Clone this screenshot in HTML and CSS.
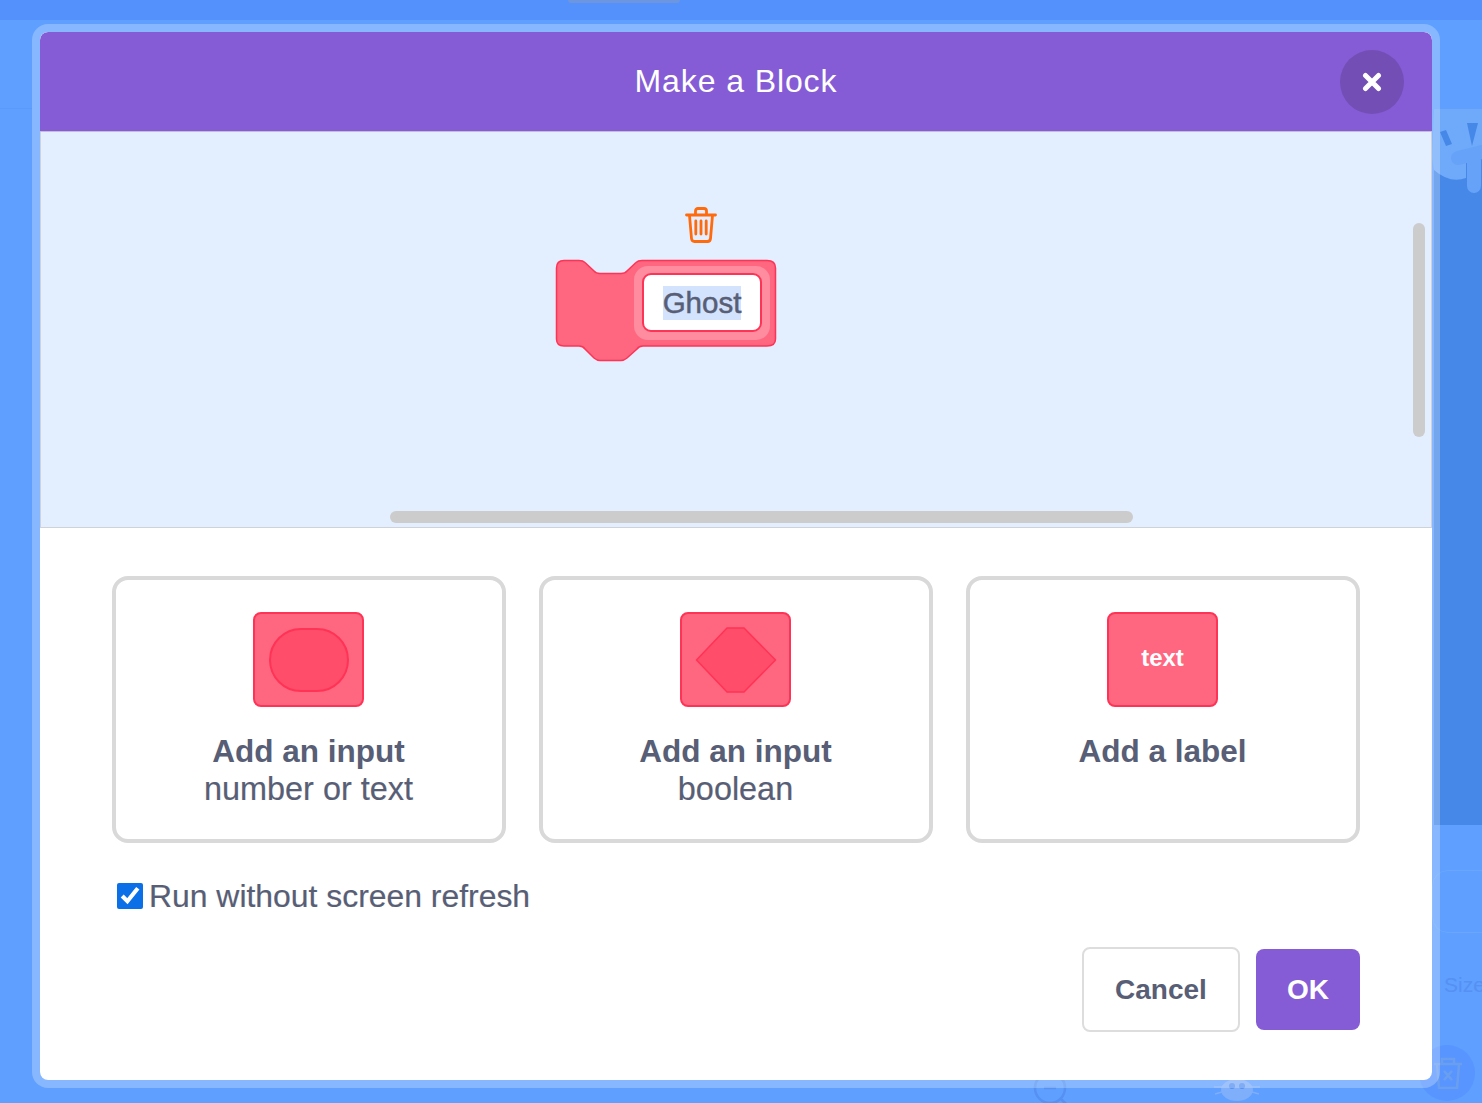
FILE: index.html
```html
<!DOCTYPE html>
<html lang="en">
<head>
    <meta charset="UTF-8">
    <title>Make a Block</title>
    <link rel="stylesheet" href="styles.css">
</head>
<body>

<!-- Editor behind the dialog, only faintly visible -->
<div class="backdrop">
    <div class="top-bar"><div class="top-tab"></div></div>
    <div class="left-line"></div>
    <div class="stage-area"></div>
    <svg class="sprite-ghost" width="62" height="90" viewBox="0 0 62 90">
        <path d="M14 1 H62 V50 H46 V70 Q30 76 14 62 L12 50 Z" fill="#6ea9fa"/>
        <path d="M47 15 H58 L52 38 Z M20 24 L26 22 L32 36 L26 38 Z" fill="#4688e8"/>
        <path d="M38 50 L62 44 M54 52 V78" stroke="#66a2f8" stroke-width="14" stroke-linecap="round" fill="none"/>
    </svg>
    <div class="panel-outline"></div>
    <span class="size-label">Size</span>
    <div class="trash-circle"></div>
    <svg class="trash-ghost" width="30" height="32" viewBox="0 0 30 32" fill="none" stroke="#6a9ff0" stroke-width="2.500">
        <path d="M1 7 H29 M9 6 V2 H21 V6 M4 8 L6 31 H24 L26 8"/>
        <path d="M11 14 L19 23 M19 14 L11 23"/>
    </svg>
    <svg class="search-ghost" width="44" height="44" viewBox="0 0 44 44" fill="none" stroke="#5590f2" stroke-width="2.500">
        <circle cx="20" cy="20" r="15"/>
        <path d="M14 20 H26 M31 31 L40 40"/>
    </svg>
    <svg class="cat-ghost" width="50" height="26" viewBox="0 0 50 26">
        <ellipse cx="25" cy="13" rx="16" ry="11" fill="#7faefa"/>
        <circle cx="20" cy="9" r="3" fill="#5590f2"/>
        <circle cx="30" cy="9" r="3" fill="#5590f2"/>
        <path d="M2 10 H10 M40 10 H48 M3 17 L10 15 M40 15 L47 17" stroke="#7faefa" stroke-width="1.500"/>
    </svg>
</div>

<div class="overlay">
    <div class="modal">
        <header class="modal-header">
            <h1>Make a Block</h1>
            <button class="close-btn" aria-label="Close">
                <svg width="20" height="20" viewBox="0 0 20 20">
                    <path d="M3.500 3.500 L16.500 16.500 M16.500 3.500 L3.500 16.500" stroke="#fff" stroke-width="5" stroke-linecap="round"/>
                </svg>
            </button>
        </header>

        <div class="workspace">
            <div class="proc-block">
                <svg class="trash" width="32" height="36" viewBox="0 0 32 36" fill="none" stroke="#ff6a0d" stroke-width="2.800" stroke-linecap="round" stroke-linejoin="round">
                    <path d="M1.500 8 H30.500"/>
                    <path d="M10.500 7.500 V4 Q10.500 1.500 13 1.500 H19 Q21.500 1.500 21.500 4 V7.500"/>
                    <path d="M4.500 8.500 L6.500 31.500 Q6.800 34.500 9.500 34.500 H22.500 Q25.200 34.500 25.500 31.500 L27.500 8.500"/>
                    <path d="M10.800 14 V27 M16 14 V27 M21.200 14 V27"/>
                </svg>
                <svg class="block-shape" width="222" height="104" viewBox="0 0 222 104">
                    <path d="M9 1.500 H24 Q28 1.500 30 3.500 L39 12 Q41 14.500 45 14.500 H66 Q70 14.500 72 12 L81 3.500 Q83 1.500 87 1.500 H212 Q220.500 1.500 220.500 9 V80 Q220.500 87 212 87 H88 Q84 87 82 90 L72 99 Q69 101.500 66 101.500 H45 Q42 101.500 39 99 L30 90 Q28 87 24 87 H9 Q1.500 87 1.500 80 V9 Q1.500 1.500 9 1.500 Z" fill="#ff6680" stroke="#ff3355" stroke-width="1.500"/>
                </svg>
                <div class="field-wrap">
                    <div class="field"><span class="selected">Ghost</span></div>
                </div>
            </div>
            <div class="scroll-v"></div>
            <div class="scroll-h"></div>
        </div>

        <div class="modal-body">
            <div class="options">
                <button class="option">
                    <span class="tile"><span class="oval"></span></span>
                    <strong>Add an input</strong>
                    <span class="option-sub">number or text</span>
                </button>
                <button class="option">
                    <span class="tile">
                        <svg width="82" height="66" viewBox="0 0 82 66">
                            <path d="M1.500 33 L32 1 H49 L80.500 33 L49 65 H32 Z" fill="#ff4d6a" stroke="#ff3355" stroke-width="1.500" stroke-linejoin="round"/>
                        </svg>
                    </span>
                    <strong>Add an input</strong>
                    <span class="option-sub">boolean</span>
                </button>
                <button class="option">
                    <span class="tile tile-text">text</span>
                    <strong>Add a label</strong>
                </button>
            </div>

            <label class="refresh">
                <input type="checkbox" checked>
                <span>Run without screen refresh</span>
            </label>

            <div class="actions">
                <button class="btn btn-cancel">Cancel</button>
                <button class="btn btn-ok">OK</button>
            </div>
        </div>
    </div>
</div>

</body>
</html>
```

FILE: styles.css
```css
* {
    box-sizing: border-box;
}

html, body {
    height: 100%;
}

body {
    margin: 0;
    overflow: hidden;
    background: #5e9fff;
    font-family: "Liberation Sans", Arial, sans-serif;
    color: #575e75;
}

button {
    font-family: inherit;
    color: inherit;
    cursor: pointer;
}

/* Editor behind the dialog */
.top-bar {
    position: absolute;
    top: 0;
    left: 0;
    right: 0;
    height: 20px;
    background: #5491fd;
}

.top-tab {
    width: 112px;
    height: 3px;
    margin-left: 568px;
    border-radius: 0 0 4px 4px;
    background: #6c96e0;
}

.left-line {
    position: absolute;
    top: 108px;
    left: 0;
    width: 32px;
    height: 1px;
    background: #5a9af8;
}

.stage-area {
    position: absolute;
    top: 110px;
    right: 0;
    width: 48px;
    height: 715px;
    background: #4688e8;
}

.sprite-ghost {
    position: absolute;
    top: 108px;
    right: 0;
}

.panel-outline {
    position: absolute;
    top: 870px;
    right: -20px;
    width: 70px;
    height: 63px;
    border: 1px solid #6aa6fd;
    border-radius: 16px;
}

.size-label {
    position: absolute;
    top: 973px;
    right: 0;
    width: 38px;
    overflow: hidden;
    font-size: 21px;
    color: #5590f2;
}

.trash-circle {
    position: absolute;
    top: 1045px;
    left: 1419px;
    width: 56px;
    height: 56px;
    border-radius: 50%;
    background: #5895ff;
}

.trash-ghost {
    position: absolute;
    top: 1057px;
    left: 1433px;
}

.search-ghost {
    position: absolute;
    top: 1068px;
    left: 1030px;
}

.cat-ghost {
    position: absolute;
    top: 1077px;
    left: 1212px;
}

/* Dialog */
.overlay {
    position: absolute;
    inset: 0;
    padding: 24px 42px 15px 32px;
}

.modal {
    height: 100%;
    display: flex;
    flex-direction: column;
    border-radius: 16px;
    overflow: hidden;
    background: #fff;
    background-clip: padding-box;
    border: 8px solid rgba(255, 255, 255, 0.25);
}

.modal-header {
    height: 100px;
    flex-shrink: 0;
    position: relative;
    display: flex;
    align-items: center;
    justify-content: center;
    background: #855cd6;
    border-bottom: 1px solid #c4bdd6;
    border-radius: 8px 8px 0 0;
}

.modal-header h1 {
    margin: 0;
    font-size: 32px;
    font-weight: 400;
    letter-spacing: 0.9px;
    color: #fff;
}

.close-btn {
    position: absolute;
    top: 18px;
    right: 28px;
    width: 64px;
    height: 64px;
    padding: 0;
    border: none;
    border-radius: 50%;
    background: #734fb5;
    display: flex;
    align-items: center;
    justify-content: center;
}

/* Block preview */
.workspace {
    height: 396px;
    flex-shrink: 0;
    position: relative;
    background: #e3efff;
    border-bottom: 1px solid #cfd3d9;
    border-left: 1px solid #cfd3d9;
    border-right: 1px solid #cfd3d9;
}

.proc-block {
    position: absolute;
    top: 75px;
    left: 514px;
    width: 222px;
    height: 155px;
}

.trash {
    position: absolute;
    top: 0;
    left: 130px;
}

.block-shape {
    position: absolute;
    top: 52px;
    left: 0;
}

.field-wrap {
    position: absolute;
    top: 59px;
    left: 79px;
    width: 136px;
    height: 74px;
    padding: 7px 8px 8px;
    border-radius: 14px;
    background: #ff8c9f;
}

.field {
    height: 100%;
    display: flex;
    align-items: center;
    justify-content: center;
    border: 2px solid #ff3355;
    border-radius: 9px;
    background: #fff;
    font-size: 29.500px;
    -webkit-text-stroke: 0.500px #575e75;
}

.selected {
    background: #d3e3fd;
    line-height: 34px;
}

.scroll-v {
    position: absolute;
    top: 91px;
    right: 6px;
    width: 12px;
    height: 214px;
    border-radius: 6px;
    background: #cccccc;
}

.scroll-h {
    position: absolute;
    bottom: 4px;
    left: 349px;
    width: 743px;
    height: 12px;
    border-radius: 6px;
    background: #cccccc;
}

/* Lower part */
.modal-body {
    flex: 1;
    display: flex;
    flex-direction: column;
    padding: 48px 72px 0;
}

.options {
    margin: 0 0.500px 0 -0.500px;
    display: grid;
    grid-template-columns: repeat(3, 1fr);
    gap: 33px;
}

.option {
    height: 267px;
    padding: 32px 0 0;
    display: flex;
    flex-direction: column;
    align-items: center;
    background: #fff;
    border: 4px solid #d9d9d9;
    border-radius: 16px;
    font-size: 31.500px;
    line-height: 38px;
}

.option strong {
    margin-top: 25px;
}

.option-sub {
    font-size: 32.400px;
    -webkit-text-stroke: 0.200px #575e75;
}

.tile {
    width: 111px;
    height: 95px;
    display: flex;
    align-items: center;
    justify-content: center;
    background: #ff6680;
    border: 2px solid #ff3355;
    border-radius: 8px;
}

.oval {
    width: 80px;
    height: 64px;
    border: 2px solid #ff3355;
    border-radius: 32px;
    background: #ff4d6a;
}

.tile-text {
    padding-bottom: 4px;
    color: #fff;
    font-size: 24px;
    font-weight: 700;
}

.refresh {
    margin-top: 34px;
    margin-left: 5px;
    display: flex;
    align-items: center;
    gap: 6px;
    font-size: 31.900px;
    line-height: 38px;
    -webkit-text-stroke: 0.200px #575e75;
}

.refresh input {
    width: 26px;
    height: 26px;
    margin: 0;
    accent-color: #0b6fe8;
}

.actions {
    margin-top: 32px;
    display: flex;
    justify-content: flex-end;
    align-items: center;
    gap: 16px;
}

.btn {
    border-radius: 8px;
    font-size: 28px;
    font-weight: 700;
}

.btn-cancel {
    width: 158px;
    height: 85px;
    background: #fff;
    border: 2px solid #dddddd;
}

.btn-ok {
    width: 104px;
    height: 81px;
    background: #855cd6;
    border: none;
    color: #fff;
}
```
